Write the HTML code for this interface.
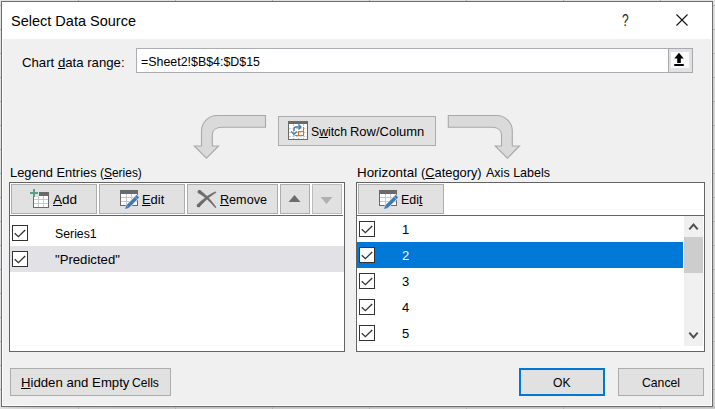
<!DOCTYPE html>
<html>
<head>
<meta charset="utf-8">
<title>Select Data Source</title>
<style>
html,body{margin:0;padding:0;}
body{width:715px;height:409px;overflow:hidden;position:relative;background:#e4e4e4;font-family:"Liberation Sans",sans-serif;font-size:13px;color:#000;}
.abs{position:absolute;}
.t{position:absolute;white-space:pre;line-height:16px;height:16px;transform-origin:0 0;}
u{text-decoration:underline;text-underline-offset:1px;text-decoration-thickness:1px;}
.btn{position:absolute;box-sizing:border-box;background:#e1e1e1;border:1px solid #adadad;}
.cb{position:absolute;box-sizing:border-box;width:16px;height:16px;border:1px solid #333;background:#fff;}
.cb svg{position:absolute;left:-1px;top:-1px;}
</style>
</head>
<body>
<!-- sheet backdrop -->
<div class="abs" id="sheet" style="left:0;top:0;width:715px;height:409px;background:#e2e2e2;"></div>
<div class="abs" style="left:713px;top:0;width:1px;height:409px;background:linear-gradient(to bottom,#e2e2e2 0,#dcdcdc 6px,#d2d2d2 40px,#c9c9c9 120px,#c6c6c6 100%);"></div>
<div class="abs" style="left:714px;top:0;width:1px;height:409px;background:linear-gradient(to bottom,#e2e2e2 0,#e0e0e0 6px,#dbdbdb 40px,#d6d6d6 120px,#d2d2d2 100%);"></div>
<div class="abs" style="left:0;top:407px;width:715px;height:1px;background:linear-gradient(to right,#e0e0e0 0,#d2d2d2 10px,#c6c6c6 40px,#c1c1c1 120px,#c1c1c1 100%);"></div>
<div class="abs" style="left:0;top:408px;width:715px;height:1px;background:linear-gradient(to right,#e2e2e2 0,#dadada 10px,#d0d0d0 40px,#cccccc 120px,#cccccc 100%);"></div>
<div class="abs" style="left:0;top:5px;width:715px;height:1px;background:#b4b4b4;"></div>
<div class="abs" style="left:0;top:29px;width:715px;height:1px;background:#b4b4b4;"></div>
<div class="abs" style="left:0;top:53px;width:715px;height:1px;background:#b4b4b4;"></div>
<div class="abs" style="left:0;top:77px;width:715px;height:1px;background:#b4b4b4;"></div>
<div class="abs" style="left:0;top:101px;width:715px;height:1px;background:#b4b4b4;"></div>
<div class="abs" style="left:0;top:125px;width:715px;height:1px;background:#b4b4b4;"></div>
<div class="abs" style="left:0;top:149px;width:715px;height:1px;background:#b4b4b4;"></div>
<div class="abs" style="left:0;top:173px;width:715px;height:1px;background:#b4b4b4;"></div>
<div class="abs" style="left:0;top:197px;width:715px;height:1px;background:#b4b4b4;"></div>
<div class="abs" style="left:0;top:221px;width:715px;height:1px;background:#b4b4b4;"></div>
<div class="abs" style="left:0;top:245px;width:715px;height:1px;background:#b4b4b4;"></div>
<div class="abs" style="left:0;top:269px;width:715px;height:1px;background:#b4b4b4;"></div>
<div class="abs" style="left:0;top:293px;width:715px;height:1px;background:#b4b4b4;"></div>
<div class="abs" style="left:0;top:317px;width:715px;height:1px;background:#b4b4b4;"></div>
<div class="abs" style="left:0;top:341px;width:715px;height:1px;background:#b4b4b4;"></div>
<div class="abs" style="left:0;top:365px;width:715px;height:1px;background:#b4b4b4;"></div>
<div class="abs" style="left:0;top:389px;width:715px;height:1px;background:#b4b4b4;"></div>
<div class="abs" style="left:78px;top:0;width:1px;height:409px;background:#b4b4b4;"></div>
<div class="abs" style="left:175px;top:0;width:1px;height:409px;background:#b4b4b4;"></div>
<div class="abs" style="left:272px;top:0;width:1px;height:409px;background:#b4b4b4;"></div>
<div class="abs" style="left:369px;top:0;width:1px;height:409px;background:#b4b4b4;"></div>
<div class="abs" style="left:466px;top:0;width:1px;height:409px;background:#b4b4b4;"></div>
<div class="abs" style="left:563px;top:0;width:1px;height:409px;background:#b4b4b4;"></div>
<div class="abs" style="left:660px;top:0;width:1px;height:409px;background:#b4b4b4;"></div>
<!-- dialog -->
<div class="abs" id="dlg" style="left:1px;top:1px;width:712px;height:406px;box-sizing:border-box;border:1px solid #6e6e6e;background:#fff;"></div>
<div class="abs" id="titlebar" style="left:2px;top:2px;width:710px;height:37px;background:#fff;"></div>
<div class="abs" id="body" style="left:3px;top:39px;width:708px;height:366px;background:#f0f0f0;"></div>

<div class="t" id="title" style="left:10.5px;top:11px;transform:scaleX(0.967);font-size:15px;line-height:20px;height:20px;">Select Data Source</div>
<div class="t" id="help" style="left:621.5px;top:10px;font-size:17px;line-height:22px;height:22px;transform:scaleX(0.7);color:#222;">?</div>
<svg class="abs" style="left:674px;top:12px;" width="16" height="16" viewBox="0 0 16 16"><path d="M2.5 2.5 L13.5 13.5 M13.5 2.5 L2.5 13.5" stroke="#111" stroke-width="1.1" fill="none"/></svg>

<!-- chart data range -->
<div class="t" id="chart" style="left:22.3px;top:55px;transform:scaleX(1.014);">Chart <u>d</u>ata range:</div>
<div class="abs" id="input" style="left:136px;top:48px;width:557px;height:25px;box-sizing:border-box;border:1px solid #abadb3;background:#fff;"></div>
<div class="t" id="formula" style="left:141.3px;top:54px;transform:scaleX(0.954);">=Sheet2!$B$4:$D$15</div>
<div class="abs" id="refbtn" style="left:668px;top:48px;width:25px;height:25px;box-sizing:border-box;border:1px solid #a6a8ae;background:#e1e1e1;"></div>
<div class="abs" style="left:671px;top:52px;width:18px;height:16px;background:#fbfbfb;"></div>
<svg class="abs" style="left:671.1px;top:51px;" width="16" height="17" viewBox="0 0 16 17"><path d="M8 1.700 L12.700 7.400 L9.800 7.400 L9.800 12 L6.200 12 L6.200 7.400 L3.300 7.400 Z" fill="#000"/><rect x="3.250" y="13" width="9.500" height="2" fill="#000"/></svg>

<!-- arrows -->
<svg class="abs" style="left:190px;top:110px;" width="80" height="52" viewBox="190 110 80 52">
<path d="M265.5 115.500 L217 115.500 C208.400 115.500 201.500 122.400 201.500 131 L201.500 146 L194.300 146 L206.400 158.200 L218.600 146 L212.300 146 L212.300 135 C212.300 130.300 216 127.200 222 127.200 L265.500 127.200 Z" fill="#dadada" stroke="#a9a9a9" stroke-width="1.1"/>
</svg>
<svg class="abs" style="left:444px;top:110px;" width="80" height="52" viewBox="444 110 80 52">
<path d="M448.300 115.500 L496.800 115.500 C505.400 115.500 512.300 122.400 512.300 131 L512.300 146 L519.500 146 L507.400 158.200 L495.200 146 L501.500 146 L501.500 135 C501.500 130.300 497.800 127.200 491.800 127.200 L448.300 127.200 Z" fill="#dadada" stroke="#a9a9a9" stroke-width="1.1"/>
</svg>

<!-- switch button -->
<div class="btn" id="switchbtn" style="left:278px;top:116px;width:158px;height:30px;"></div>
<svg class="abs" id="switchicon" style="left:288px;top:121px;" width="20" height="19" viewBox="0 0 20 19">
<rect x="0.5" y="0.5" width="19" height="18" fill="#fff" stroke="#6a6a6a"/>
<rect x="0" y="0" width="20" height="3" fill="#6a6a6a"/>
<path d="M5.5 3 V18 M10.5 3 V18 M15.5 3 V18 M1 7.5 H19 M1 11.5 H19 M1 15.5 H19" stroke="#c8c8c8" stroke-width="1" stroke-dasharray="2 1.5" fill="none"/>
<path d="M6 10 V8 C6 6.8 6.8 6 8 6 H12" stroke="#3b78b8" stroke-width="1.3" fill="none"/>
<path d="M10.5 3.5 L13 6 L10.5 8.5" stroke="#3b78b8" stroke-width="1.3" fill="none"/>
<path d="M3.2 10.5 L6 13.3 L8.8 10.5" stroke="#3b78b8" stroke-width="1.3" fill="none"/>
<path d="M15.5 6 V14.5 H6.5 M15.5 10.5 H10.5 V14.5" stroke="#e07020" stroke-width="1.2" fill="none"/>
</svg>
<div class="t" id="switch" style="left:310.5px;top:124px;transform:scaleX(0.939);">S<u>w</u>itch </div>
<div class="t" id="switch2" style="left:350.1px;top:124px;transform:scaleX(0.9985);">Row/Column</div>

<!-- labels -->
<div class="t" id="legend" style="left:10px;top:165px;transform:scaleX(0.990);">Legend Entries </div>
<div class="t" id="legend2" style="left:100.2px;top:165px;transform:scaleX(0.919);">(<u>S</u>eries)</div>
<div class="t" id="horiz" style="left:357.3px;top:165px;transform:scaleX(1.028);">Horizontal </div>
<div class="t" id="horiz1" style="left:421.2px;top:165px;transform:scaleX(0.987);">(<u>C</u>ategory)</div>
<div class="t" id="horiz2" style="left:486.3px;top:165px;transform:scaleX(0.963);">Axis Labels</div>

<!-- left frame -->
<div class="abs" id="lframe" style="left:9px;top:182px;width:336px;height:170px;box-sizing:border-box;border:1px solid #646464;background:#fff;"></div>
<div class="abs" style="left:10px;top:215px;width:333px;height:1px;background:#646464;"></div>
<div class="btn" style="left:11px;top:184px;width:86px;height:30px;"></div>
<div class="btn" style="left:99px;top:184px;width:86px;height:30px;"></div>
<div class="btn" style="left:187px;top:184px;width:91px;height:30px;"></div>
<div class="btn" style="left:280px;top:184px;width:30px;height:30px;"></div>
<div class="btn" style="left:312px;top:184px;width:30px;height:30px;border-color:#bcbcbc;"></div>

<!-- add icon -->
<svg class="abs" style="left:29px;top:188px;" width="21" height="21" viewBox="29 188 21 21">
<rect x="33.5" y="192.5" width="15" height="15" fill="#fff" stroke="#6a6a6a"/>
<rect x="33" y="192" width="16" height="4" fill="#6a6a6a"/>
<path d="M38.5 196 V207 M43.5 196 V207 M34 199.5 H48 M34 203.5 H48" stroke="#c8c8c8" fill="none"/>
<rect x="29" y="188" width="10" height="9" fill="#e1e1e1"/>
<rect x="33" y="197" width="1" height="10" fill="#6a6a6a"/>
<path d="M34 189 V197 M30 193 H38" stroke="#4fa58a" stroke-width="2" fill="none"/>
</svg>
<div class="t" id="add" style="left:53px;top:192px;transform:scaleX(1.04);"><u>A</u>dd</div>

<!-- edit icon (left) -->
<svg class="abs editicon" style="left:119px;top:189px;" width="21" height="21" viewBox="119 189 21 21">
<rect x="120.500" y="190.500" width="17" height="15" fill="#fff" stroke="#6a6a6a"/>
<rect x="120" y="190" width="18" height="4" fill="#6a6a6a"/>
<path d="M126.500 194 V205 M131.500 194 V205 M121 197.500 H137 M121 201.500 H137" stroke="#c8c8c8" fill="none"/>
<path d="M136.300 193.700 L140.200 197.600 L128.200 209.200 L124.600 209.700 L125.200 206 Z" fill="#e6e6e6"/>
<path d="M137.900 196.300 L127.500 206.700" stroke="#3e78b5" stroke-width="3.400" fill="none"/>
<path d="M125.100 209 L126.200 205.600 L128.600 207.900 Z" fill="#3e78b5"/>
<path d="M135.100 196.800 L137.500 199.200" stroke="#b9cde6" stroke-width="0.700" fill="none"/>
</svg>
<div class="t" id="edit" style="left:142.3px;top:192px;transform:scaleX(0.992);"><u>E</u>dit</div>

<!-- remove icon -->
<svg class="abs" style="left:196px;top:189px;" width="22" height="20" viewBox="196 189 22 20">
<path d="M198.0 192.7 L199.8 193.8 L201.6 195.0 L203.4 196.3 L205.2 197.6 L206.9 199.1 L208.6 200.7 L210.3 202.3 L212.0 204.0 L213.7 205.9 L215.3 207.8 L216.1 207.2 L214.6 205.2 L213.0 203.2 L211.5 201.3 L209.9 199.4 L208.3 197.7 L206.6 196.0 L205.0 194.4 L203.3 192.9 L201.5 191.4 L199.8 190.1 Z" fill="#6a6a6a" stroke="#6a6a6a" stroke-width="0.5" stroke-linejoin="round"/>
<path d="M199.3 207.1 L201.1 205.0 L203.0 203.1 L204.8 201.3 L206.5 199.6 L208.2 198.1 L209.9 196.7 L211.5 195.5 L213.0 194.4 L214.5 193.4 L216.0 192.6 L215.6 191.8 L214.0 192.4 L212.3 193.2 L210.6 194.2 L208.8 195.3 L207.0 196.5 L205.1 197.9 L203.2 199.4 L201.1 201.1 L199.1 202.9 L196.9 204.9 Z" fill="#6a6a6a" stroke="#6a6a6a" stroke-width="0.5" stroke-linejoin="round"/>
<circle cx="199.2" cy="191.700" r="1.650" fill="#6a6a6a"/><circle cx="198.400" cy="205.700" r="1.650" fill="#6a6a6a"/>
</svg>
<div class="t" id="remove" style="left:220.4px;top:192px;transform:scaleX(0.97);"><u>R</u>emove</div>

<!-- up / down -->
<svg class="abs" style="left:288px;top:194px;" width="14" height="9" viewBox="288 194 14 9"><path d="M294.500 195 L300.500 202 L288.500 202 Z" fill="#6d6d6d"/></svg>
<svg class="abs" style="left:319px;top:196px;" width="15" height="9" viewBox="319 196 15 9"><path d="M320.500 197 L332.500 197 L326.500 204 Z" fill="#b0b0b0"/></svg>

<!-- left rows -->
<div class="abs" style="left:10px;top:246px;width:334px;height:26px;background:#e1e1e6;"></div>
<div class="cb" style="left:12px;top:225px;"><svg width="16" height="16" viewBox="0 0 16 16"><path d="M2.700 8.300 L6.400 11.700 L13.200 5" stroke="#333" stroke-width="1.300" fill="none"/></svg></div>
<div class="cb" style="left:12px;top:251px;"><svg width="16" height="16" viewBox="0 0 16 16"><path d="M2.700 8.300 L6.400 11.700 L13.200 5" stroke="#333" stroke-width="1.300" fill="none"/></svg></div>
<div class="t" id="series1" style="left:55.4px;top:226px;transform:scaleX(0.946);">Series1</div>
<div class="t" id="pred" style="left:55px;top:252px;transform:scaleX(1.011);">"Predicted"</div>

<!-- right frame -->
<div class="abs" id="rframe" style="left:356px;top:182px;width:349px;height:170px;box-sizing:border-box;border:1px solid #646464;background:#fff;"></div>
<div class="abs" style="left:357px;top:215px;width:347px;height:1px;background:#646464;"></div>
<div class="btn" style="left:358px;top:184px;width:86px;height:30px;"></div>
<svg class="abs editicon" style="left:378px;top:189px;" width="21" height="21" viewBox="119 189 21 21">
<rect x="120.500" y="190.500" width="17" height="15" fill="#fff" stroke="#6a6a6a"/>
<rect x="120" y="190" width="18" height="4" fill="#6a6a6a"/>
<path d="M126.500 194 V205 M131.500 194 V205 M121 197.500 H137 M121 201.500 H137" stroke="#c8c8c8" fill="none"/>
<path d="M136.300 193.700 L140.200 197.600 L128.200 209.200 L124.600 209.700 L125.200 206 Z" fill="#e6e6e6"/>
<path d="M137.900 196.300 L127.500 206.700" stroke="#3e78b5" stroke-width="3.400" fill="none"/>
<path d="M125.100 209 L126.200 205.600 L128.600 207.900 Z" fill="#3e78b5"/>
<path d="M135.100 196.800 L137.500 199.200" stroke="#b9cde6" stroke-width="0.700" fill="none"/>
</svg>
<div class="t" id="edit2" style="left:401.4px;top:192px;transform:scaleX(0.955);">Edi<u>t</u></div>

<!-- right rows -->
<div class="abs" style="left:357px;top:242px;width:326px;height:26px;background:#0078d7;"></div>
<div class="cb" style="left:359px;top:221px;"><svg width="16" height="16" viewBox="0 0 16 16"><path d="M2.700 8.300 L6.400 11.700 L13.200 5" stroke="#333" stroke-width="1.300" fill="none"/></svg></div>
<div class="cb" style="left:359px;top:247px;"><svg width="16" height="16" viewBox="0 0 16 16"><path d="M2.700 8.300 L6.400 11.700 L13.200 5" stroke="#333" stroke-width="1.300" fill="none"/></svg></div>
<div class="cb" style="left:359px;top:273px;"><svg width="16" height="16" viewBox="0 0 16 16"><path d="M2.700 8.300 L6.400 11.700 L13.200 5" stroke="#333" stroke-width="1.300" fill="none"/></svg></div>
<div class="cb" style="left:359px;top:299px;"><svg width="16" height="16" viewBox="0 0 16 16"><path d="M2.700 8.300 L6.400 11.700 L13.200 5" stroke="#333" stroke-width="1.300" fill="none"/></svg></div>
<div class="cb" style="left:359px;top:325px;"><svg width="16" height="16" viewBox="0 0 16 16"><path d="M2.700 8.300 L6.400 11.700 L13.200 5" stroke="#333" stroke-width="1.300" fill="none"/></svg></div>
<div class="t" id="n1" style="left:402px;top:222px;">1</div>
<div class="t" id="n2" style="left:402px;top:248px;color:#fff;">2</div>
<div class="t" id="n3" style="left:402px;top:274px;">3</div>
<div class="t" id="n4" style="left:402px;top:300px;">4</div>
<div class="t" id="n5" style="left:402px;top:326px;">5</div>

<!-- scrollbar -->
<div class="abs" style="left:684px;top:216px;width:19px;height:130px;background:#f0f0f0;"></div>
<div class="abs" style="left:684px;top:237px;width:19px;height:36px;background:#cdcdcd;"></div>
<svg class="abs" style="left:686px;top:220px;" width="15" height="12" viewBox="686 220 15 12"><path d="M689.300 229.300 L693.500 224.500 L697.700 229.300" stroke="#505050" stroke-width="2" fill="none"/></svg>
<svg class="abs" style="left:686px;top:330px;" width="15" height="12" viewBox="686 330 15 12"><path d="M689.300 332.700 L693.500 337.500 L697.700 332.700" stroke="#505050" stroke-width="2" fill="none"/></svg>

<!-- bottom buttons -->
<div class="btn" style="left:10px;top:368px;width:161px;height:28px;"></div>
<div class="t" id="hidden" style="left:21.4px;top:375px;transform:scaleX(1.014);"><u>H</u>idden and Empty</div>
<div class="t" id="hidden2" style="left:132.3px;top:375px;transform:scaleX(0.93);">Cells</div>
<div class="btn" style="left:519px;top:368px;width:86px;height:28px;border:2px solid #0078d7;"></div>
<div class="t" id="ok" style="left:553px;top:375px;transform:scaleX(0.933);">OK</div>
<div class="btn" style="left:618px;top:368px;width:86px;height:28px;"></div>
<div class="t" id="cancel" style="left:641.5px;top:375px;transform:scaleX(0.94);">Cancel</div>
</body>
</html>
